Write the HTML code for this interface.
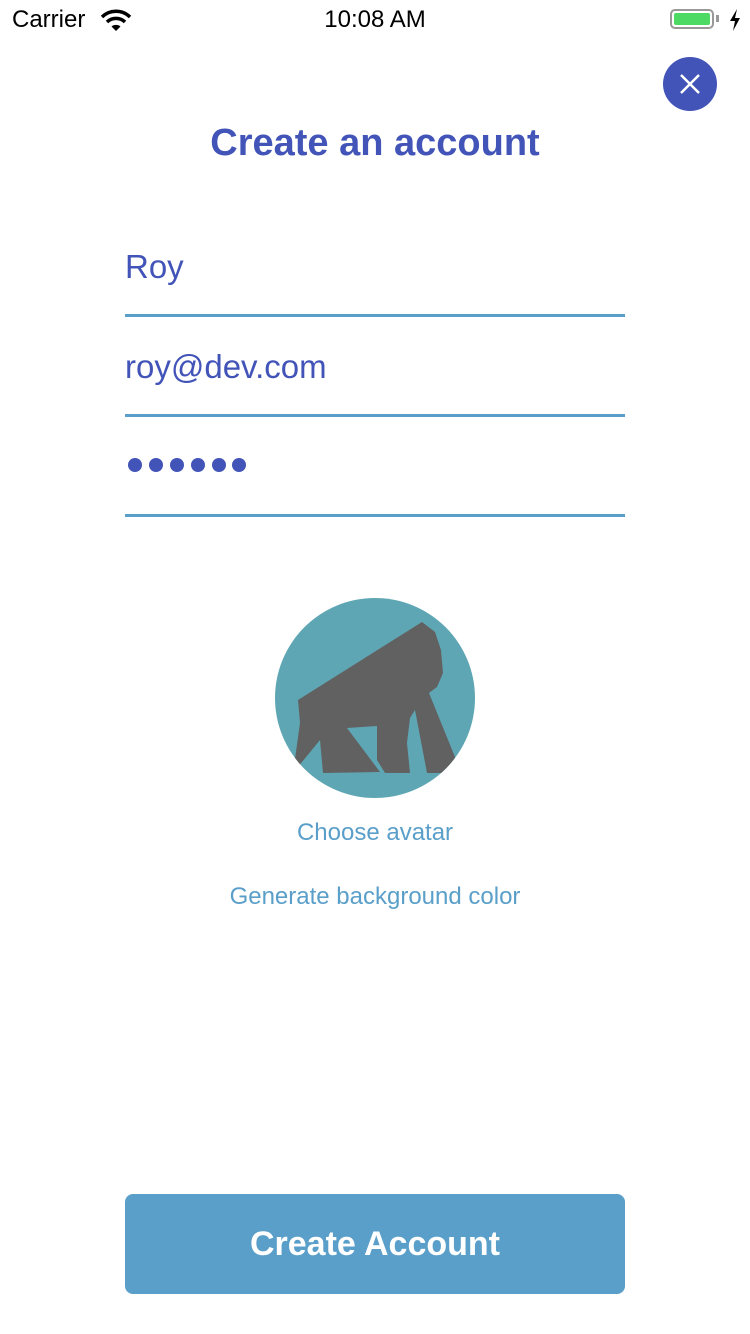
<!DOCTYPE html>
<html><head><meta charset="utf-8"><style>
body{margin:0;width:750px;height:1334px;background:#fff;font-family:"Liberation Sans",sans-serif;position:relative;overflow:hidden}
.a{position:absolute}
.line{position:absolute;left:125px;width:500px;height:3px;background:#5a9fc9}
.in{position:absolute;left:125px;font-size:33px;color:#4254b8}
</style></head><body>
<div class="a" style="left:12px;top:6px;font-size:24px">Carrier</div>
<svg class="a" style="left:100px;top:8px" width="32" height="24" viewBox="0 0 32 24"><path d="M2 9 A20 20 0 0 1 30 9" stroke="#000" stroke-width="3.5" fill="none"/><path d="M7 14 A13 13 0 0 1 25 14" stroke="#000" stroke-width="3.5" fill="none"/><path d="M11.5 18.5 L16 23 L20.5 18.5 A7 7 0 0 0 11.5 18.5Z" fill="#000"/></svg>
<div class="a" style="left:0;width:750px;top:6px;text-align:center;font-size:24px">10:08 AM</div>
<div class="a" style="left:670px;top:9px;width:44px;height:20px;border:2px solid #999;border-radius:5px;box-sizing:border-box"><div style="margin:2px;height:12px;background:#4cd964;border-radius:2px"></div></div>
<div class="a" style="left:716px;top:15px;width:3px;height:7px;background:#999"></div>
<svg class="a" style="left:728px;top:9px" width="14" height="22" viewBox="0 0 14 22"><path d="M9 0 L2 12 H7 L5 22 L12 9 H7 Z" fill="#000"/></svg>
<div class="a" style="left:663px;top:57px;width:54px;height:54px;border-radius:50%;background:#4254b8"></div>
<svg class="a" style="left:663px;top:57px" width="54" height="54"><path d="M18 18 L36 36 M36 18 L18 36" stroke="#fff" stroke-width="2.5"/></svg>
<div class="a" style="left:0;width:750px;top:122px;text-align:center;font-size:38px;font-weight:bold;color:#4254b8">Create an account</div>
<div class="in" style="top:248px">Roy</div><div class="line" style="top:314px"></div>
<div class="in" style="top:348px">roy@dev.com</div><div class="line" style="top:414px"></div>
<svg class="a" style="left:125px;top:455px" width="130" height="20"><g fill="#4254b8"><circle cx="10" cy="10" r="7"/><circle cx="31" cy="10" r="7"/><circle cx="52" cy="10" r="7"/><circle cx="73" cy="10" r="7"/><circle cx="94" cy="10" r="7"/><circle cx="114" cy="10" r="7"/></g></svg>
<div class="line" style="top:514px"></div>
<svg class="a" style="left:275px;top:598px" width="200" height="200" viewBox="0 0 200 200"><defs><clipPath id="c"><circle cx="100" cy="100" r="100"/></clipPath></defs><circle cx="100" cy="100" r="100" fill="#5fa6b4"/><path clip-path="url(#c)" fill="#616161" d="M23,102 L147,24 L160,34 L166,52 L168,75 L162,89 L154,95 L180,159 L177,175 L152,175 L140,112 L135,120 L132,145 L135,175 L110,175 L102,162 L102,128 L72,130 L105,174 L48,175 L45,142 L18,175 L25,125 Z"/></svg>
<div class="a" style="left:0;width:750px;top:819px;text-align:center;font-size:24px;color:#5a9fc9">Choose avatar</div>
<div class="a" style="left:0;width:750px;top:883px;text-align:center;font-size:24px;color:#5a9fc9">Generate background color</div>
<div class="a" style="left:125px;top:1194px;width:500px;height:100px;border-radius:8px;background:#5a9fc9;color:#fff;font-size:34px;font-weight:bold;text-align:center;line-height:100px">Create Account</div>
</body></html>
